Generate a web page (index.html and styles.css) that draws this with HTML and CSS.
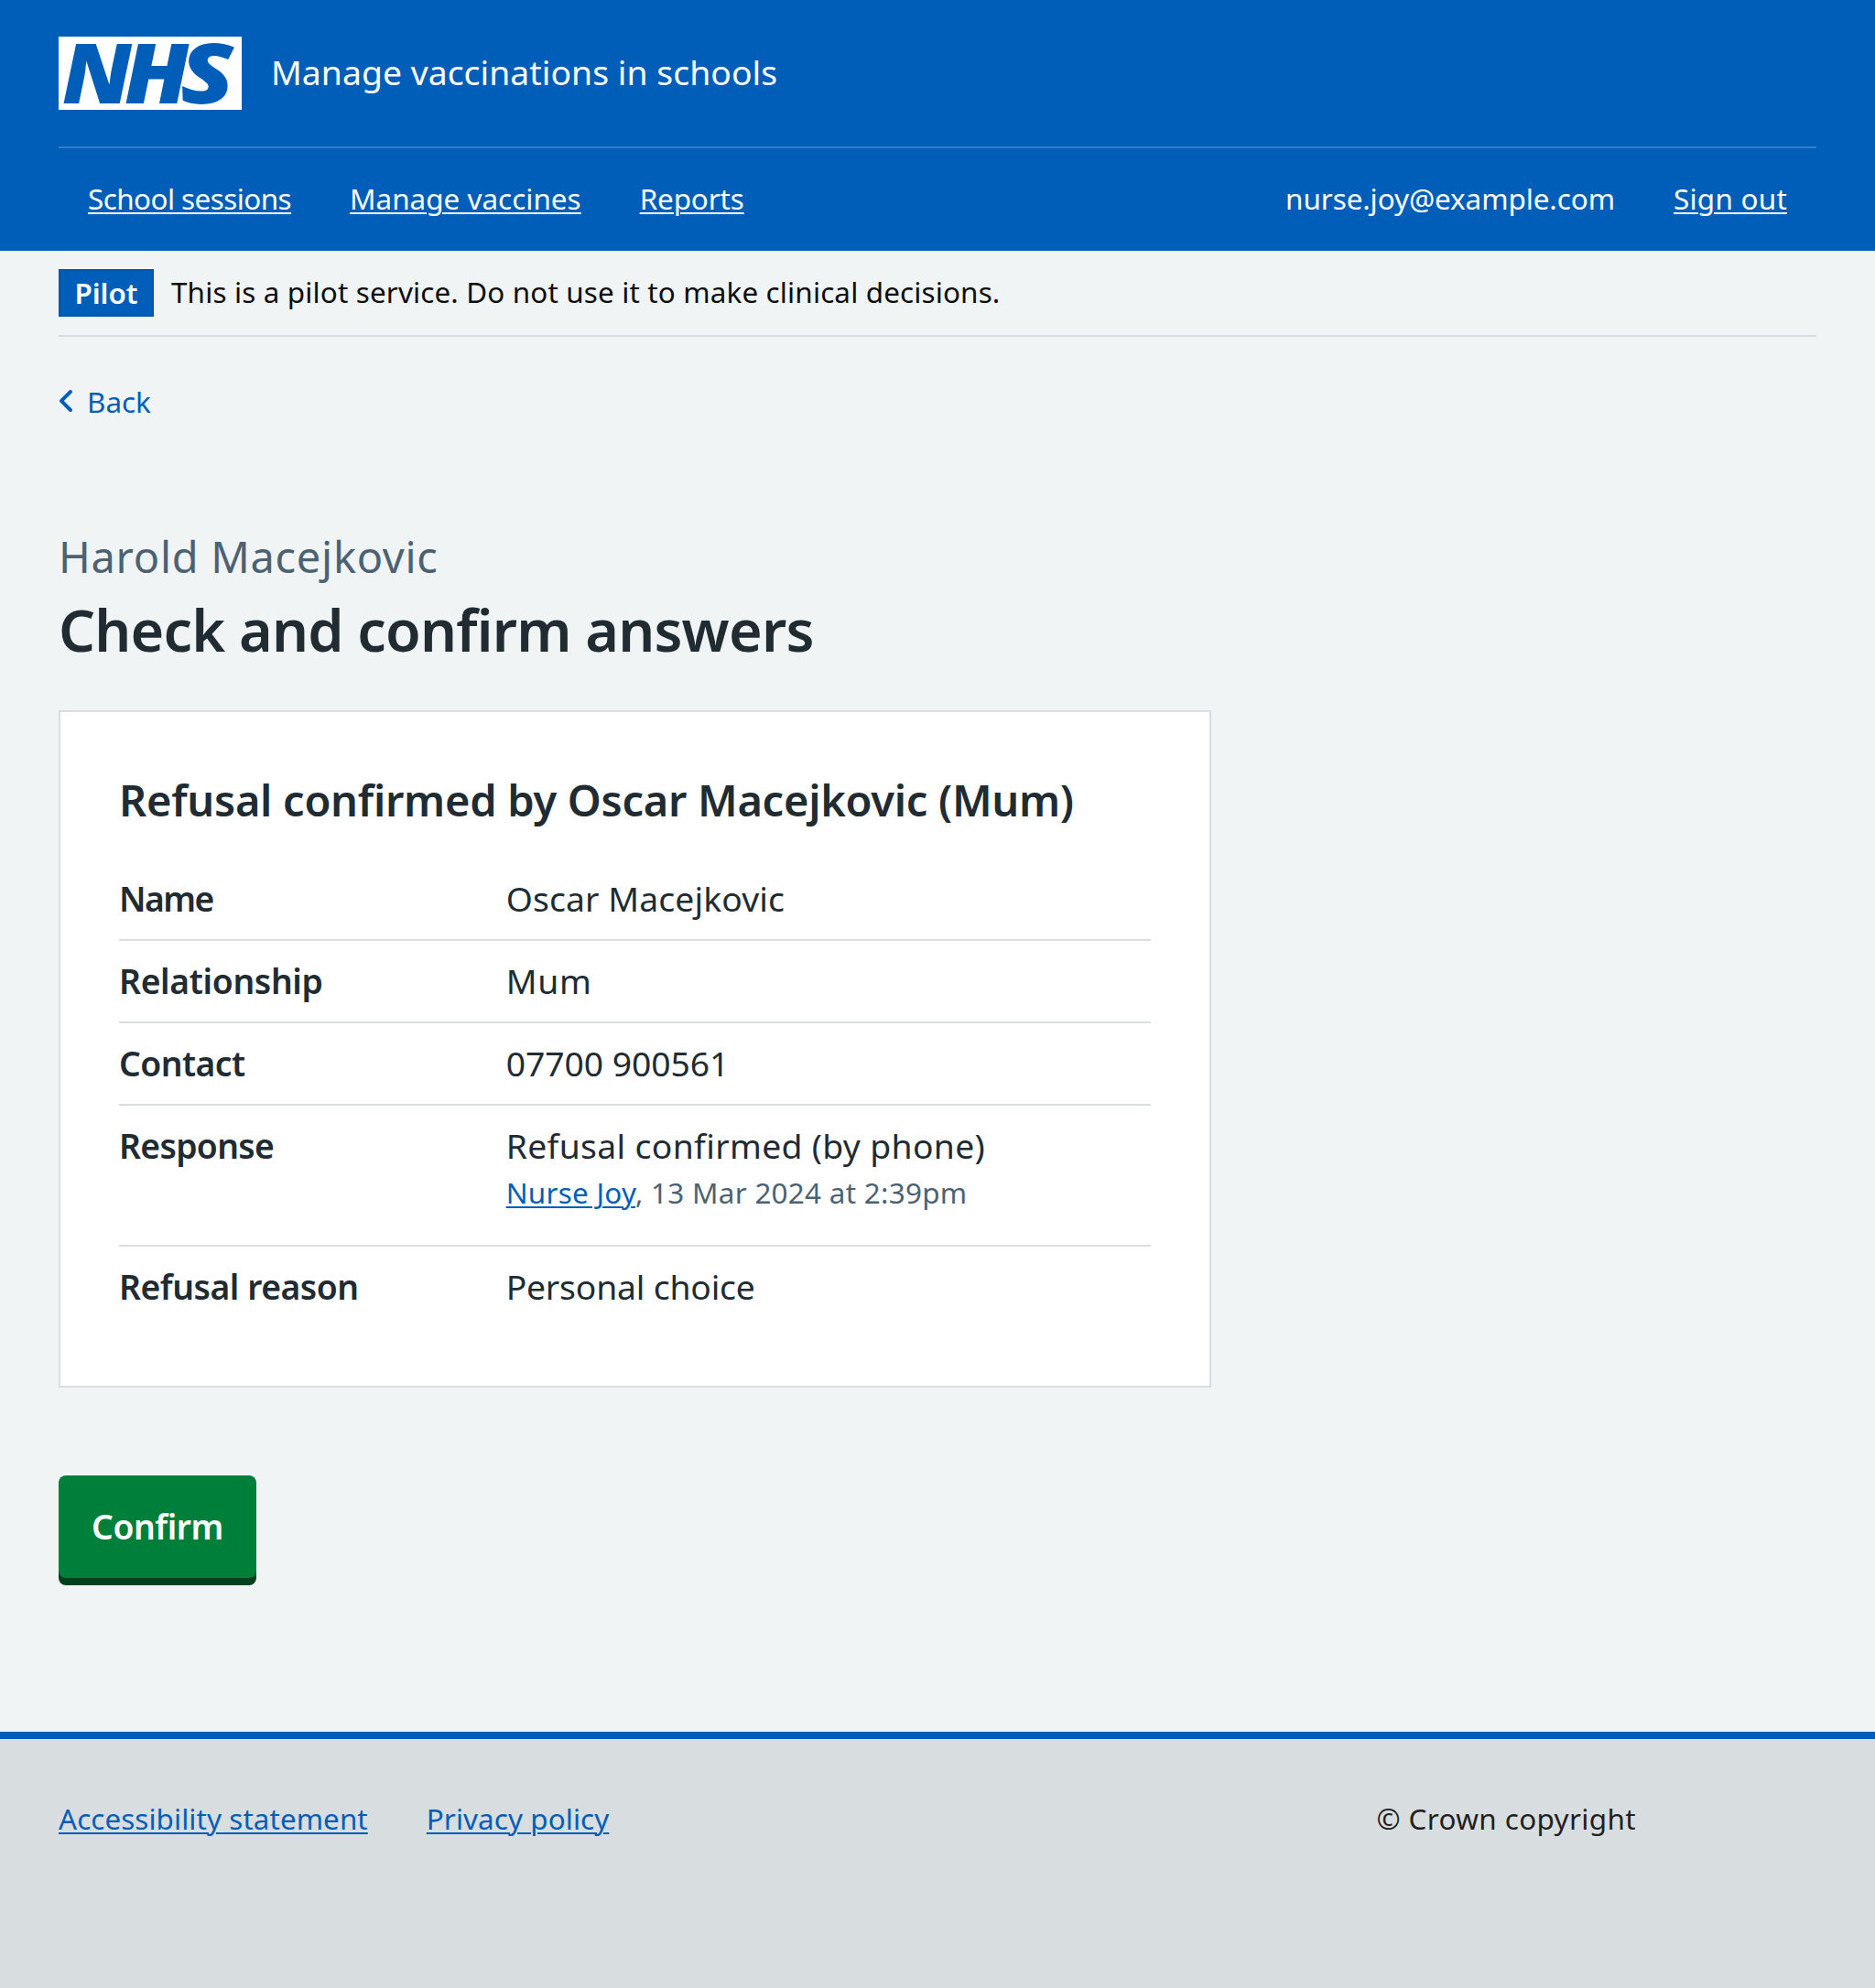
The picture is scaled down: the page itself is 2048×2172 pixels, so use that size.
FILE: index.html
```html
<!DOCTYPE html>
<html lang="en">
<head>
<meta charset="utf-8">
<title>Check and confirm answers</title>
<link rel="stylesheet" href="styles.css">
</head>
<body>
<header class="header">
  <div class="header-top">
    <svg class="logo" viewBox="0 0 200 80" role="img" aria-label="NHS">
      <rect width="200" height="80" fill="#fff"/>
      <g class="logo-text">
        <text transform="translate(4 72.5) skewX(1)" textLength="77" lengthAdjust="spacingAndGlyphs">N</text>
        <text transform="translate(72 72.5) skewX(1.7)" textLength="72" lengthAdjust="spacingAndGlyphs">H</text>
        <text transform="translate(133.5 72.5) skewX(2)" textLength="59.5" lengthAdjust="spacingAndGlyphs">S</text>
      </g>
    </svg>
    <span class="service-name">Manage vaccinations in schools</span>
  </div>
  <nav class="nav">
    <a class="nav-link nav-sessions" href="#">School sessions</a>
    <a class="nav-link nav-vaccines" href="#">Manage vaccines</a>
    <a class="nav-link nav-reports" href="#">Reports</a>
    <span class="nav-user">nurse.joy@example.com</span>
    <a class="nav-link nav-signout" href="#">Sign out</a>
  </nav>
</header>
<div class="container">
  <div class="phase">
    <strong class="tag">Pilot</strong>
    <span class="phase-text">This is a pilot service. Do not use it to make clinical decisions.</span>
  </div>
  <a class="back" href="#">
    <svg class="back-icon" viewBox="8.5 6 7 12" aria-hidden="true"><path fill="currentColor" d="M8.5 12c0-.3.1-.5.3-.7l5-5c.4-.4 1-.4 1.4 0s.4 1 0 1.4L10.9 12l4.3 4.3c.4.4.4 1 0 1.4s-1 .4-1.4 0l-5-5c-.2-.2-.3-.5-.3-.7z"/></svg>
    <span>Back</span>
  </a>
  <main>
    <h1 class="heading"><span class="caption">Harold Macejkovic</span><span class="title">Check and confirm answers</span></h1>
    <section class="card">
      <h2 class="card-heading">Refusal confirmed by Oscar Macejkovic (Mum)</h2>
      <dl class="summary">
        <div class="row"><dt class="key key-name">Name</dt><dd class="value">Oscar Macejkovic</dd></div>
        <div class="row"><dt class="key">Relationship</dt><dd class="value value-mum">Mum</dd></div>
        <div class="row"><dt class="key key-contact">Contact</dt><dd class="value value-phone">07700 900561</dd></div>
        <div class="row row-response"><dt class="key key-response">Response</dt><dd class="value value-response">Refusal confirmed (by phone)<div class="meta"><a class="link" href="#">Nurse Joy</a>, 13 Mar 2024 at 2:39pm</div></dd></div>
        <div class="row"><dt class="key key-reason">Refusal reason</dt><dd class="value value-reason">Personal choice</dd></div>
      </dl>
    </section>
    <button class="button" type="button">Confirm</button>
  </main>
</div>
<footer class="footer">
  <a class="link footer-link" href="#">Accessibility statement</a>
  <a class="link footer-link" href="#">Privacy policy</a>
  <span class="copyright">© Crown copyright</span>
</footer>
</body>
</html>
```
FILE: styles.css
```css
* { box-sizing: border-box; }

body {
  margin: 0;
  min-height: 2172px;
  display: flex;
  flex-direction: column;
  background: #f0f4f5;
  color: #212b32;
  font-family: "Noto Sans", "Open Sans", sans-serif;
  font-size: 31.4px;
  line-height: 48px;
}

.header {
  height: 274px;
  padding: 0 64px;
  background: #005eb8;
  color: #fff;
}

.header-top {
  display: flex;
  align-items: center;
  gap: 32px;
  height: 160px;
}

.logo { display: block; width: 200px; height: 80px; overflow: visible; }

.logo-text {
  fill: #005eb8;
  font-family: "Noto Sans", sans-serif;
  font-size: 91.2px;
  font-style: italic;
  font-weight: 900;
}

.service-name {
  padding-bottom: 2px;
  font-size: 37.3px;
  letter-spacing: 0.0012em;
}

.nav {
  display: flex;
  align-items: center;
  gap: 64px;
  height: 114px;
  padding: 0 32px 2px;
  border-top: 2px solid rgba(255, 255, 255, 0.2);
}

.nav-link,
.link {
  text-decoration: underline;
  text-decoration-thickness: 2px;
  text-underline-offset: 3px;
}

.nav-link { color: #fff; }
.link { color: #005eb8; }
.nav-sessions { letter-spacing: -0.0176em; }
.nav-vaccines { letter-spacing: 0.001em; }
.nav-reports { letter-spacing: -0.004em; }
.nav-user { margin-left: auto; letter-spacing: -0.002em; }
.nav-signout { letter-spacing: 0.0084em; }

.container { height: 1618px; padding: 0 64px; }

.phase {
  display: flex;
  align-items: center;
  gap: 19px;
  height: 94px;
  border-bottom: 2px solid #d8dde0;
}

.tag {
  width: 104px;
  height: 52px;
  border: 2px solid #0056a8;
  background: #005eb8;
  color: #fff;
  font-weight: 600;
  text-align: center;
}

.phase-text {
  padding-bottom: 2px;
  color: #0b0c0c;
  letter-spacing: 0.005em;
}

.back {
  display: flex;
  align-items: center;
  gap: 16px;
  width: max-content;
  margin: 47px 0 0 1px;
  color: #005eb8;
  text-decoration: none;
}

.back-icon { width: 14px; height: 24px; margin-top: -2px; }

.heading { margin: 113px 0 0; font-size: inherit; }

.caption,
.title { display: block; }

.caption {
  color: #4c6272;
  font-size: 47px;
  font-weight: 400;
  line-height: 64px;
  letter-spacing: 0.0148em;
}

.title {
  margin-top: 10px;
  font-size: 62.8px;
  font-weight: 600;
  line-height: 75px;
  letter-spacing: -0.0125em;
}

.card {
  width: 1259px;
  height: 740px;
  margin-top: 51px;
  padding: 64px 64px 0;
  border: 2px solid #d8dde0;
  background: #fff;
}

.card-heading {
  margin: 0 0 32px;
  font-size: 47px;
  font-weight: 600;
  line-height: 64px;
  letter-spacing: -0.006em;
  white-space: nowrap;
}

.summary { margin: 0; font-size: 37.3px; line-height: 53px; }

.row {
  display: grid;
  grid-template-columns: 3fr 5fr;
  height: 90px;
  padding-top: 17px;
  border-bottom: 2px solid #d8dde0;
}

.row:last-child { border-bottom: 0; }
.row-response { height: 154px; }
.key { font-weight: 600; letter-spacing: -0.0095em; }
.key-name { letter-spacing: -0.042em; }
.key-contact { letter-spacing: -0.0145em; }
.key-response { letter-spacing: -0.018em; }
.key-reason { letter-spacing: -0.0125em; }
.value { margin: 0; letter-spacing: 0.0035em; }
.value-mum { letter-spacing: 0.02em; }
.value-phone { letter-spacing: -0.0015em; }
.value-response { letter-spacing: 0.009em; }
.value-reason { letter-spacing: -0.005em; }

.meta {
  margin-top: 1px;
  color: #4c6272;
  font-size: 31.4px;
  line-height: 48px;
  letter-spacing: 0.009em;
}

.button {
  display: block;
  width: 216px;
  height: 112px;
  margin-top: 96px;
  padding: 0 0 1px;
  border: 0;
  border-radius: 8px;
  background: #007f3b;
  box-shadow: 0 8px 0 #00401e;
  color: #fff;
  font: 600 37.3px/56px "Noto Sans", "Open Sans", sans-serif;
  letter-spacing: -0.012em;
}

.footer {
  display: flex;
  align-items: flex-start;
  gap: 64px;
  height: 280px;
  padding: 63px 64px 0;
  border-top: 8px solid #005eb8;
  background: #d8dde0;
}

.footer-link { letter-spacing: 0.0025em; }

.copyright {
  margin: 0 197px 0 auto;
  color: #231f20;
  letter-spacing: 0.0122em;
}
```
